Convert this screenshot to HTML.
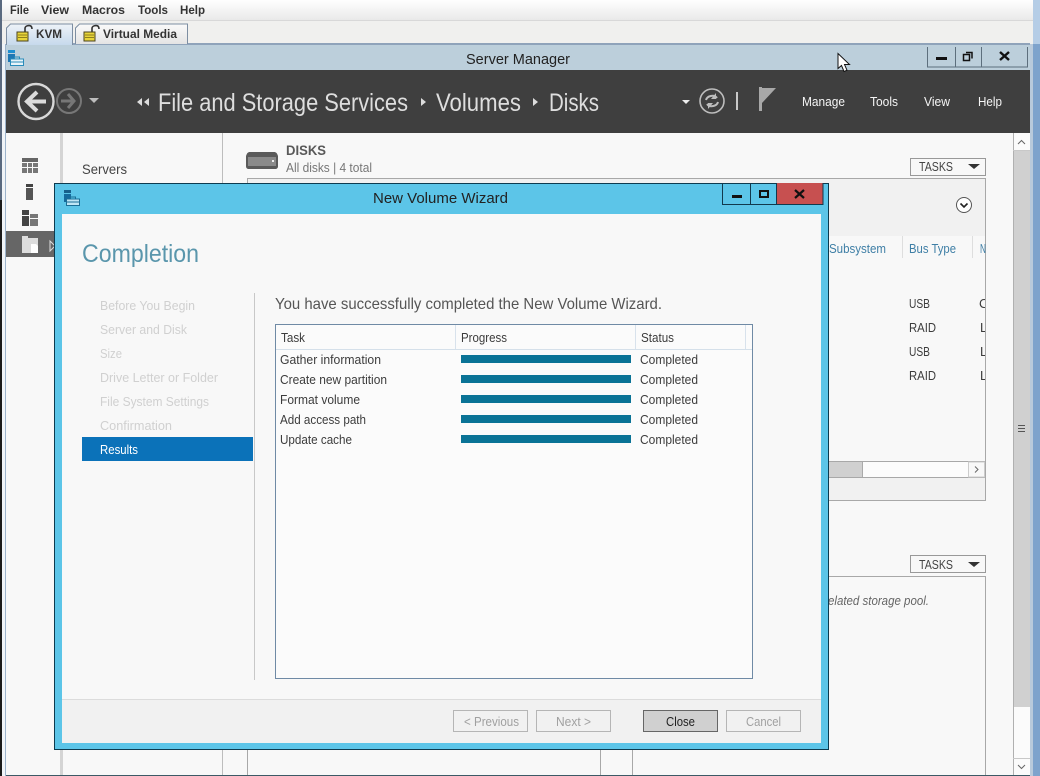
<!DOCTYPE html>
<html lang="en"><head><meta charset="utf-8"><title>New Volume Wizard</title>
<style>
html,body{margin:0;padding:0;width:1040px;height:776px;overflow:hidden;background:#fff}
svg{display:block}
text{font-family:"Liberation Sans",sans-serif;font-size:12px;fill:#333}
.n{fill:#d0d0d0;font-size:13px}
.r{fill:#3c3c3c;font-size:13px}
.h{fill:#fff;fill-opacity:.95;font-size:13px}
.t{font-size:25px;fill:#dedede}
.m{font-size:12px;font-weight:bold;fill:#333}
.c{fill:#3f7fa6;font-size:13px}
</style></head><body>
<svg width="1040" height="776" viewBox="0 0 1040 776" xmlns="http://www.w3.org/2000/svg">
<defs>
<linearGradient id="mg" x1="0" y1="0" x2="0" y2="1"><stop offset="0" stop-color="#fff"/><stop offset="1" stop-color="#e9e9e9"/></linearGradient>
<linearGradient id="kg" x1="0" y1="0" x2="0" y2="1"><stop offset="0" stop-color="#eef3f8"/><stop offset="1" stop-color="#c6d9ec"/></linearGradient>
<linearGradient id="vg" x1="0" y1="0" x2="0" y2="1"><stop offset="0" stop-color="#fafafa"/><stop offset="1" stop-color="#e4e4e4"/></linearGradient>
<g id="lock"><path d="M9 7V3.500C9 1.500 11 .6 13 .6s3 1 3 3.400" fill="none" stroke="#333" stroke-width="1.600"/><rect x="1" y="7" width="11" height="9" fill="#e8d53a" stroke="#4a4320"/><path d="M2 10h9M2 12.500h9" stroke="#8f7f1c"/></g>
<g id="sm"><rect x="0" y="0" width="7" height="3" fill="#1f8fd0"/><rect x="0" y="4" width="7" height="8" fill="#1f78b4"/><path d="M2.500 15.500V9h13v6.500z" fill="#e8f4fa" stroke="#2a8cbb"/><path d="M6.500 9V7h5v2" fill="none" stroke="#2a8cbb"/><path d="M3 12h12" stroke="#2a8cbb"/></g>
</defs>

<!-- desktop edges -->
<rect width="1040" height="776" fill="#f4f4f4"/>
<rect x="0" y="0" width="2" height="200" fill="#5a6a80"/>
<rect x="0" y="200" width="2" height="576" fill="#1a1a1a"/>
<rect x="2" y="0" width="4" height="776" fill="#f0f4f8"/>
<rect x="5" y="44" width="1" height="732" fill="#9db4cc"/>
<rect x="1030" y="0" width="3" height="776" fill="#b9cadb"/>
<rect x="1033" y="0" width="7" height="776" fill="#7ea3cc"/>
<rect x="1033" y="0" width="7" height="44" fill="#b5cde6"/>

<!-- menu bar -->
<rect x="2" y="0" width="1031" height="20" fill="url(#mg)"/>
<rect x="2" y="20" width="1031" height="1" fill="#d8d8d8"/>
<rect x="2" y="21" width="1031" height="23" fill="#f0f0ee"/>
<text class="m" x="10" y="14" textLength="19" lengthAdjust="spacingAndGlyphs">File</text>
<text class="m" x="41" y="14" textLength="28" lengthAdjust="spacingAndGlyphs">View</text>
<text class="m" x="82" y="14" textLength="43" lengthAdjust="spacingAndGlyphs">Macros</text>
<text class="m" x="138" y="14" textLength="30" lengthAdjust="spacingAndGlyphs">Tools</text>
<text class="m" x="180" y="14" textLength="25" lengthAdjust="spacingAndGlyphs">Help</text>

<!-- tabs -->
<rect x="6" y="43" width="1024" height="2" fill="#8fa3ba"/>
<path d="M75.500 44V28l4-4h108v20" fill="url(#vg)" stroke="#7d8ea2"/>
<path d="M6.500 45V28l4-4h62v21" fill="url(#kg)" stroke="#7d8ea2"/>
<use href="#lock" x="16" y="25"/>
<use href="#lock" x="83" y="25"/>
<text class="m" x="36" y="38" textLength="26" lengthAdjust="spacingAndGlyphs">KVM</text>
<text class="m" x="103" y="38" textLength="74" lengthAdjust="spacingAndGlyphs">Virtual Media</text>

<!-- server manager title -->
<rect x="6" y="45" width="1024" height="25" fill="#bccfdb"/>
<use href="#sm" x="8" y="50"/>
<text x="466" y="64" textLength="104" lengthAdjust="spacingAndGlyphs" style="font-size:15px;fill:#222">Server Manager</text>
<path d="M927.500 47v20h100V47M955.500 47v20M981.500 47v20" fill="none" stroke="#5d6f7d"/>
<rect x="936" y="57" width="11" height="3" fill="#111"/>
<path d="M966 52.500h6v6M963.500 54.500h6v6h-6z" fill="none" stroke="#111" stroke-width="1.500"/>
<path d="M1000 52l9 8M1009 52l-9 8" stroke="#111" stroke-width="2.400"/>

<!-- dark bar -->
<rect x="6" y="70" width="1024" height="63" fill="#3f3f3f"/>
<circle cx="36" cy="101.500" r="17.500" fill="none" stroke="#d8d8d8" stroke-width="2.400"/>
<path d="M46 101.500H29M37 92l-10 9.500 10 9.500" fill="none" stroke="#dcdcdc" stroke-width="4"/>
<circle cx="69" cy="101" r="12" fill="none" stroke="#777" stroke-width="2"/>
<path d="M61 101h12M68 94l6 7-6 7" fill="none" stroke="#777" stroke-width="3"/>
<path d="M89 98h10l-5 5z" fill="#bdbdbd"/>
<path d="M142 98v8l-5-4zM149 98v8l-5-4z" fill="#ddd"/>
<text class="t" x="158" y="111" textLength="250" lengthAdjust="spacingAndGlyphs">File and Storage Services</text>
<path d="M421 98v8l5-4z" fill="#ddd"/>
<text class="t" x="436" y="111" textLength="85" lengthAdjust="spacingAndGlyphs">Volumes</text>
<path d="M533 98v8l5-4z" fill="#ddd"/>
<text class="t" x="549" y="111" textLength="50" lengthAdjust="spacingAndGlyphs">Disks</text>
<path d="M682 100h8l-4 4z" fill="#eee"/>
<circle cx="712" cy="101" r="12" fill="none" stroke="#bdbdbd" stroke-width="1.600"/>
<path d="M706 100c1-4 8-6 11-2M718 102c-1 4-8 6-11 2" fill="none" stroke="#bdbdbd" stroke-width="2"/>
<path d="M716 93v6h-5zM708 109v-6h5z" fill="#bdbdbd"/>
<rect x="736" y="92" width="2" height="18" fill="#c8c8c8"/>
<rect x="759" y="87" width="3" height="24" fill="#a8a8a8"/>
<path d="M762 88h14l-14 15z" fill="#a8a8a8"/>
<text class="h" x="802" y="106" textLength="43" lengthAdjust="spacingAndGlyphs">Manage</text>
<text class="h" x="870" y="106" textLength="28" lengthAdjust="spacingAndGlyphs">Tools</text>
<text class="h" x="924" y="106" textLength="26" lengthAdjust="spacingAndGlyphs">View</text>
<text class="h" x="978" y="106" textLength="24" lengthAdjust="spacingAndGlyphs">Help</text>

<!-- main content -->
<rect x="6" y="133" width="1024" height="642" fill="#f8f8f8"/>
<rect x="6" y="775" width="1024" height="1" fill="#3c5a66"/>
<rect x="60" y="133" width="3" height="642" fill="#d4d4d4"/>
<rect x="222" y="133" width="1" height="642" fill="#bdbdbd"/>
<!-- left nav icons -->
<g fill="#777">
<rect x="22" y="158" width="16" height="4" fill="#666"/>
<rect x="22" y="163" width="5" height="4"/><rect x="28" y="163" width="4" height="4"/><rect x="33" y="163" width="5" height="4"/>
<rect x="22" y="168" width="5" height="5"/><rect x="28" y="168" width="4" height="5"/><rect x="33" y="168" width="5" height="5"/>
<rect x="26" y="184" width="7" height="3" fill="#444"/><rect x="26" y="188" width="7" height="12" fill="#555"/>
<rect x="22" y="210" width="7" height="5" fill="#444"/><rect x="22" y="216" width="7" height="10" fill="#444"/><rect x="30" y="214" width="8" height="4" fill="#777"/><rect x="30" y="219" width="8" height="7" fill="#777"/>
</g>
<rect x="6" y="231" width="49" height="26" fill="#666"/>
<path d="M22 236h6v2h10v15H22z" fill="#ddd"/>
<path d="M31 244h5l2 2v7h-7z" fill="#fff"/>
<path d="M50 241v10l5-5z" fill="none" stroke="#ddd"/>
<text x="82" y="174" textLength="45" lengthAdjust="spacingAndGlyphs" style="font-size:14px;fill:#444">Servers</text>

<!-- disks header -->
<path d="M246 156c1-3 2-4 4-4h24c2 0 3 1 4 4v10c0 2-1 3-3 3h-26c-2 0-3-1-3-3z" fill="#5a5a5a"/>
<rect x="248" y="157" width="28" height="9" fill="#8a8a8a"/>
<rect x="272" y="160" width="2" height="2" fill="#eee"/>
<text x="286" y="155" textLength="40" lengthAdjust="spacingAndGlyphs" style="font-size:14px;font-weight:bold;fill:#595959">DISKS</text>
<text x="286" y="172" textLength="86" lengthAdjust="spacingAndGlyphs" style="font-size:13px;fill:#777">All disks | 4 total</text>
<rect x="910.500" y="158.500" width="75" height="17" fill="#f8f8f8" stroke="#999"/>
<text x="919" y="171" textLength="34" lengthAdjust="spacingAndGlyphs" style="font-size:13px;fill:#444">TASKS</text>
<path d="M968 164h12l-6 5z" fill="#333"/>

<!-- disks panel -->
<rect x="247.500" y="178.500" width="738" height="322" fill="#f8f8f8" stroke="#a8a8a8"/>
<rect x="248" y="179" width="737" height="57" fill="#f1f1f1"/>
<circle cx="964" cy="205" r="7.500" fill="#fff" stroke="#555"/>
<path d="M960.500 203.500l3.500 3.500 3.500-3.500" fill="none" stroke="#222" stroke-width="1.600"/>
<path d="M902.500 236v22M972.500 236v22" stroke="#dedede"/>
<text class="c" x="829" y="253" textLength="57" lengthAdjust="spacingAndGlyphs">Subsystem</text>
<text class="c" x="909" y="253" textLength="47" lengthAdjust="spacingAndGlyphs">Bus Type</text>
<text class="c" x="980" y="253" textLength="6" lengthAdjust="spacingAndGlyphs">N</text>
<text class="r" x="909" y="308" textLength="21" lengthAdjust="spacingAndGlyphs">USB</text>
<text class="r" x="909" y="332" textLength="27" lengthAdjust="spacingAndGlyphs">RAID</text>
<text class="r" x="909" y="356" textLength="21" lengthAdjust="spacingAndGlyphs">USB</text>
<text class="r" x="909" y="380" textLength="27" lengthAdjust="spacingAndGlyphs">RAID</text>
<svg x="975" y="290" width="10" height="100">
<text class="r" x="4" y="18">C</text><text class="r" x="5" y="42">L</text><text class="r" x="5" y="66">L</text><text class="r" x="5" y="90">L</text>
</svg>
<rect x="828" y="461.500" width="157" height="16" fill="#fcfcfc" stroke="#a8a8a8"/>
<rect x="828" y="462" width="34" height="15" fill="#d0d0d0"/>
<rect x="862" y="462" width="1" height="15" fill="#aaa"/>
<rect x="968.500" y="462" width="16" height="15" fill="#f8f8f8" stroke="#ccc"/>
<path d="M975 466.500l3 3-3 3" fill="none" stroke="#666"/>
<rect x="828" y="478" width="157" height="22" fill="#f1f1f1"/>

<!-- lower panel -->
<rect x="910.500" y="555.500" width="75" height="17" fill="#f8f8f8" stroke="#999"/>
<text x="919" y="569" textLength="34" lengthAdjust="spacingAndGlyphs" style="font-size:13px;fill:#444">TASKS</text>
<path d="M968 562h12l-6 5z" fill="#333"/>
<path d="M247.500 775V576.500h738V775" fill="#f8f8f8" stroke="#a8a8a8"/>
<path d="M600.500 745v30M632.500 745v30" stroke="#a8a8a8"/>
<text x="828" y="605" textLength="101" lengthAdjust="spacingAndGlyphs" style="font-style:italic;font-size:13px;fill:#666">elated storage pool.</text>

<!-- main scrollbar -->
<rect x="1013" y="133" width="17" height="642" fill="#fbfbfb"/>
<rect x="1013" y="150" width="17" height="557" fill="#d0d0d0"/>
<path d="M1013.500 133v642" stroke="#b0b0b0"/>
<path d="M1013 150.500h17M1013 758.500h17" stroke="#c8c8c8"/>
<path d="M1018 144l3.500-3.500 3.500 3.500M1018 765l3.500 3.500 3.500-3.500" fill="none" stroke="#666"/>
<path d="M1018 425.500h7M1018 428.500h7M1018 431.500h7" stroke="#555"/>

<!-- wizard -->
<rect x="54.500" y="183.500" width="774" height="566" fill="#5cc5e8" stroke="#0d3b4f"/>
<rect x="62" y="214" width="759" height="529" fill="#f8f8f8"/>
<rect x="62" y="699" width="759" height="44" fill="#f1f1f1"/>
<rect x="62" y="699" width="759" height="1" fill="#dcdcdc"/>
<g transform="translate(64 190)"><rect width="7" height="3" fill="#17608a"/><rect y="4" width="7" height="8" fill="#156a9c"/><path d="M2.500 15.500V9h13v6.500z" fill="#bfe6f5" stroke="#1a6e96"/><path d="M6.500 9V7h5v2" fill="none" stroke="#1a6e96"/><path d="M3 12h12" stroke="#1a6e96"/></g>
<text x="373" y="203" textLength="135" lengthAdjust="spacingAndGlyphs" style="font-size:15px;fill:#222">New Volume Wizard</text>
<rect x="776" y="183" width="47" height="22" fill="#c75050"/>
<path d="M722.500 183v21.500h100.500V183M750.500 183v21M776.500 183v21" fill="none" stroke="#12394d"/>
<rect x="732" y="195" width="10" height="3" fill="#111"/>
<rect x="760" y="191" width="8" height="6" fill="none" stroke="#111" stroke-width="2"/>
<path d="M795 190l9 8M804 190l-9 8" stroke="#111" stroke-width="2.200"/>

<text x="82" y="262" textLength="117" lengthAdjust="spacingAndGlyphs" style="font-size:25px;fill:#5a96ac">Completion</text>
<text class="n" x="100" y="310" textLength="95" lengthAdjust="spacingAndGlyphs">Before You Begin</text>
<text class="n" x="100" y="334" textLength="87" lengthAdjust="spacingAndGlyphs">Server and Disk</text>
<text class="n" x="100" y="358" textLength="22" lengthAdjust="spacingAndGlyphs">Size</text>
<text class="n" x="100" y="382" textLength="118" lengthAdjust="spacingAndGlyphs">Drive Letter or Folder</text>
<text class="n" x="100" y="406" textLength="109" lengthAdjust="spacingAndGlyphs">File System Settings</text>
<text class="n" x="100" y="430" textLength="72" lengthAdjust="spacingAndGlyphs">Confirmation</text>
<rect x="82" y="437" width="171" height="24" fill="#0b72b9"/>
<text x="100" y="454" textLength="38" lengthAdjust="spacingAndGlyphs" style="font-size:13px;fill:#fff">Results</text>
<rect x="254" y="293" width="1" height="387" fill="#c8c8c8"/>

<text x="275" y="309" textLength="387" lengthAdjust="spacingAndGlyphs" style="font-size:16px;fill:#555">You have successfully completed the New Volume Wizard.</text>

<!-- results table -->
<rect x="275.500" y="324.500" width="477" height="354" fill="#fbfbfb" stroke="#6f8aa5"/>
<path d="M276 349.500h476" stroke="#d5e0ea"/>
<path d="M455.500 325v24M635.500 325v24M745.500 325v24" stroke="#d8e2ec"/>
<text class="r" x="281" y="342" textLength="24" lengthAdjust="spacingAndGlyphs">Task</text>
<text class="r" x="461" y="342" textLength="46" lengthAdjust="spacingAndGlyphs">Progress</text>
<text class="r" x="641" y="342" textLength="33" lengthAdjust="spacingAndGlyphs">Status</text>
<g fill="#0a7396">
<rect x="461" y="355" width="170" height="8"/><rect x="461" y="375" width="170" height="8"/><rect x="461" y="395" width="170" height="8"/><rect x="461" y="415" width="170" height="8"/><rect x="461" y="435" width="170" height="8"/>
</g>
<text class="r" x="280" y="364" textLength="101" lengthAdjust="spacingAndGlyphs">Gather information</text>
<text class="r" x="280" y="384" textLength="107" lengthAdjust="spacingAndGlyphs">Create new partition</text>
<text class="r" x="280" y="404" textLength="80" lengthAdjust="spacingAndGlyphs">Format volume</text>
<text class="r" x="280" y="424" textLength="86" lengthAdjust="spacingAndGlyphs">Add access path</text>
<text class="r" x="280" y="444" textLength="72" lengthAdjust="spacingAndGlyphs">Update cache</text>
<text class="r" x="640" y="364" textLength="58" lengthAdjust="spacingAndGlyphs">Completed</text>
<text class="r" x="640" y="384" textLength="58" lengthAdjust="spacingAndGlyphs">Completed</text>
<text class="r" x="640" y="404" textLength="58" lengthAdjust="spacingAndGlyphs">Completed</text>
<text class="r" x="640" y="424" textLength="58" lengthAdjust="spacingAndGlyphs">Completed</text>
<text class="r" x="640" y="444" textLength="58" lengthAdjust="spacingAndGlyphs">Completed</text>

<!-- footer buttons -->
<rect x="453.500" y="710.500" width="74" height="21" fill="#f1f1f1" stroke="#b5b5b5"/>
<rect x="536.500" y="710.500" width="74" height="21" fill="#f1f1f1" stroke="#b5b5b5"/>
<rect x="643.500" y="710.500" width="74" height="21" fill="#d0d0d0" stroke="#666"/>
<rect x="726.500" y="710.500" width="74" height="21" fill="#f1f1f1" stroke="#b5b5b5"/>
<text x="464" y="726" textLength="55" lengthAdjust="spacingAndGlyphs" style="font-size:13px;fill:#a0a0a0">&lt; Previous</text>
<text x="556" y="726" textLength="35" lengthAdjust="spacingAndGlyphs" style="font-size:13px;fill:#a0a0a0">Next &gt;</text>
<text x="666" y="726" textLength="29" lengthAdjust="spacingAndGlyphs" style="font-size:13px;fill:#222">Close</text>
<text x="746" y="726" textLength="35" lengthAdjust="spacingAndGlyphs" style="font-size:13px;fill:#a0a0a0">Cancel</text>

<!-- cursor -->
<path d="M838 53.500v15l3.500-3 2.500 6 3-1.300-2.500-5.700h5z" fill="#fff" stroke="#111"/>
</svg>
</body></html>
